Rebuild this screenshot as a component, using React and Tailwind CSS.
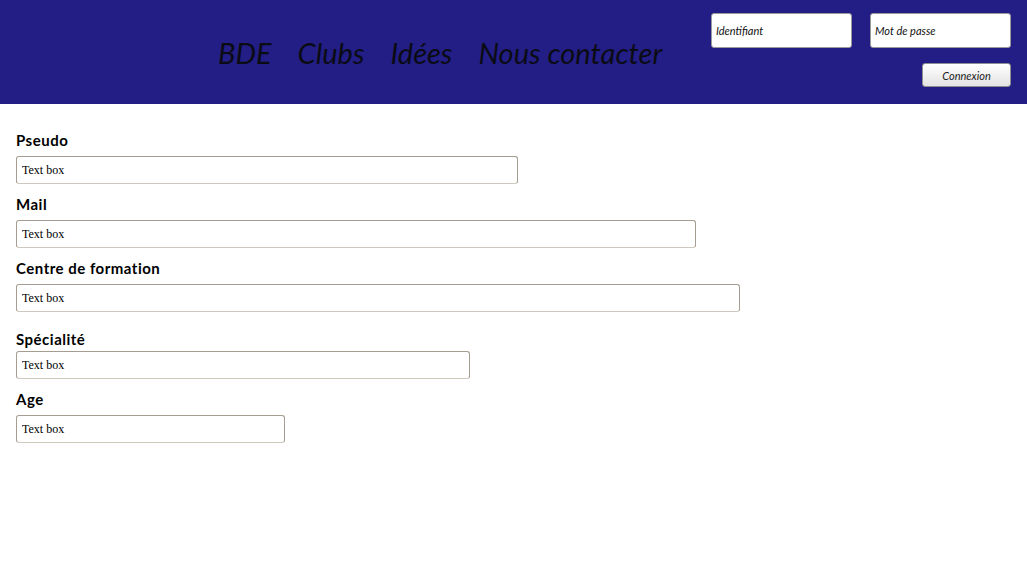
import React from 'react';

const fields = [
  { label: 'Pseudo', w: 'w-[502px]', mt: 'mt-[27px]' },
  { label: 'Mail', w: 'w-[680px]', mt: 'mt-[11px]' },
  { label: 'Centre de formation', w: 'w-[724px]', mt: 'mt-[11px]' },
  { label: 'Spécialité', w: 'w-[454px]', mt: 'mt-[18px]', gap: 'mt-[1px]' },
  { label: 'Age', w: 'w-[269px]', mt: 'mt-[11px]' },
];

function Field({ label, w, mt, gap = 'mt-[5px]' }) {
  return (
    <div className={`flex flex-col ${mt}`}>
      <label className="h-[20px] leading-[19px] text-[15px] font-bold tracking-[0.5px] text-black">{label}</label>
      <input
        readOnly
        value="Text box"
        className={`${gap} ${w} h-[28px] px-[5px] pt-[1px] rounded-[3px] border border-[#a59d90] border-b-[#cfc8bd] bg-white text-[12px] text-black font-['Liberation_Serif',serif] outline-none`}
      />
    </div>
  );
}

export default function App() {
  return (
    <div className="w-[1027px] h-[563px] bg-white font-['Lato',sans-serif] overflow-hidden">
      <header className="h-[104px] bg-[#221e85] flex">
        <nav className="flex items-start gap-[26px] ml-[218px] pt-[33px] text-[29px] italic text-[#0b0b14] leading-[40px]">
          <span>BDE</span>
          <span>Clubs</span>
          <span>Idées</span>
          <span>Nous contacter</span>
        </nav>
        <div className="ml-auto mr-[16px] pt-[13px] flex flex-col items-end">
          <div className="flex gap-[18px]">
            <input readOnly value="Identifiant" className="w-[141px] h-[35px] px-[4px] rounded-[3px] border border-[#9a9a9a] bg-white text-[11px] italic text-[#111] outline-none" />
            <input readOnly value="Mot de passe" className="w-[141px] h-[35px] px-[4px] rounded-[3px] border border-[#9a9a9a] bg-white text-[11px] italic text-[#111] outline-none" />
          </div>
          <button className="mt-[15px] w-[89px] h-[24px] pt-[2px] rounded-[3px] border border-[#8f8f8f] bg-gradient-to-b from-white to-[#e3e3e3] text-[11px] italic text-[#222]">Connexion</button>
        </div>
      </header>
      <main className="pl-[16px]">
        {fields.map(f => <Field key={f.label} {...f} />)}
      </main>
    </div>
  );
}
